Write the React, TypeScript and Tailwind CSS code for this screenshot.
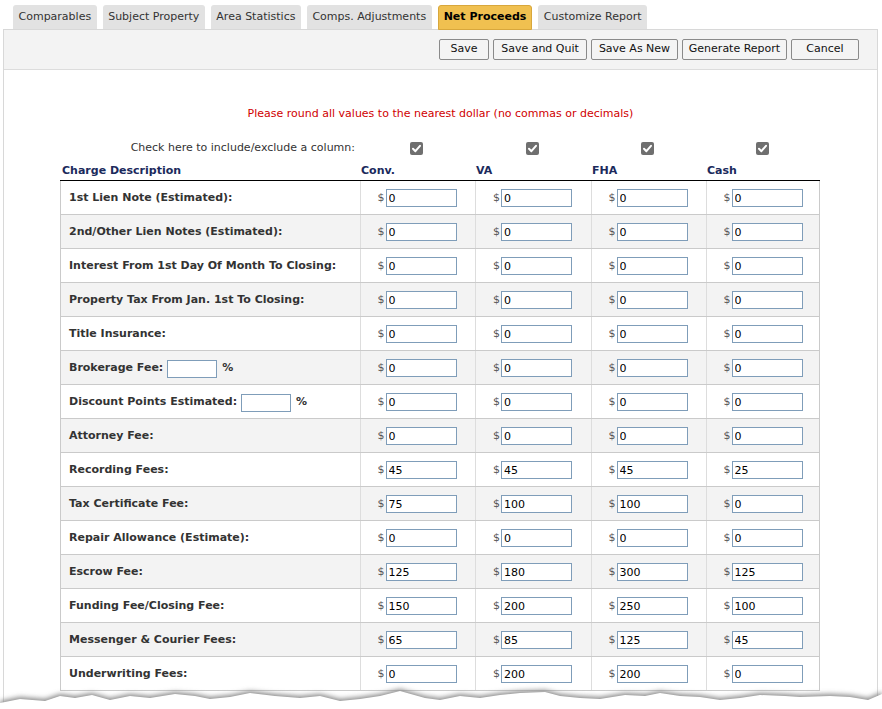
import React from 'react';

const tabs = ['Comparables', 'Subject Property', 'Area Statistics', 'Comps. Adjustments', 'Net Proceeds', 'Customize Report'];

const buttons = [
  { label: 'Save', w: 'w-[50px]' },
  { label: 'Save and Quit', w: 'w-[94px]' },
  { label: 'Save As New', w: 'w-[87px]' },
  { label: 'Generate Report', w: 'w-[105px]' },
  { label: 'Cancel', w: 'w-[68px]' },
];

type Row = { label: string; pct?: boolean; values: string[] };

const rows: Row[] = [
  { label: '1st Lien Note (Estimated):', values: ['0', '0', '0', '0'] },
  { label: '2nd/Other Lien Notes (Estimated):', values: ['0', '0', '0', '0'] },
  { label: 'Interest From 1st Day Of Month To Closing:', values: ['0', '0', '0', '0'] },
  { label: 'Property Tax From Jan. 1st To Closing:', values: ['0', '0', '0', '0'] },
  { label: 'Title Insurance:', values: ['0', '0', '0', '0'] },
  { label: 'Brokerage Fee:', pct: true, values: ['0', '0', '0', '0'] },
  { label: 'Discount Points Estimated:', pct: true, values: ['0', '0', '0', '0'] },
  { label: 'Attorney Fee:', values: ['0', '0', '0', '0'] },
  { label: 'Recording Fees:', values: ['45', '45', '45', '25'] },
  { label: 'Tax Certificate Fee:', values: ['75', '100', '100', '0'] },
  { label: 'Repair Allowance (Estimate):', values: ['0', '0', '0', '0'] },
  { label: 'Escrow Fee:', values: ['125', '180', '300', '125'] },
  { label: 'Funding Fee/Closing Fee:', values: ['150', '200', '250', '100'] },
  { label: 'Messenger & Courier Fees:', values: ['65', '85', '125', '45'] },
  { label: 'Underwriting Fees:', values: ['0', '200', '200', '0'] },
];

const columns = ['Conv.', 'VA', 'FHA', 'Cash'];

function CheckBox() {
  return (
    <svg width="13" height="13" viewBox="0 0 13 13">
      <rect x="0" y="0" width="13" height="13" rx="2" fill="#6f6f6f" />
      <path d="M3 6.8 L5.4 9.2 L10 3.8" stroke="#fff" strokeWidth="2" fill="none" strokeLinecap="round" strokeLinejoin="round" />
    </svg>
  );
}

// jagged paper tear at the bottom of the screenshot
function TornEdge() {
  const pts = 'M0 709 L0 697 L20 693 L45 695 L60 690 L75 692 L92 689 L110 694 L130 690 L150 692 L175 688 L195 690 L210 693 L230 691 L250 687 L275 690 L300 692 L320 690 L340 695 L360 693 L380 690 L400 685 L425 692 L440 694 L460 690 L480 692 L500 689 L520 687 L545 686 L560 690 L580 692 L600 693 L625 689 L645 690 L660 687 L680 690 L700 691 L720 694 L740 692 L760 689 L785 690 L800 691 L830 690 L850 691 L868 694 L882 688 L882 709 Z';
  return (
    <svg className="absolute left-0 top-0 pointer-events-none" width="882" height="709" viewBox="0 0 882 709">
      <defs>
        <filter id="sh" x="-5%" y="-50%" width="110%" height="200%">
          <feGaussianBlur stdDeviation="2.5" />
        </filter>
      </defs>
      <path d={pts} fill="#8a8a8a" filter="url(#sh)" transform="translate(0 4)" />
      <path d={pts} fill="#ffffff" transform="translate(0 6)" />
    </svg>
  );
}

export default function App() {
  return (
    <div className="relative w-[882px] h-[709px] overflow-hidden bg-white font-['DejaVu_Sans',sans-serif]">
      {/* Tabs */}
      <div className="flex gap-[6px] pl-[13px] pt-[5px]">
        {tabs.map((t) =>
          t === 'Net Proceeds' ? (
            <div key={t} className="h-[25px] px-[5px] flex items-center rounded-t-[3px] bg-[#f0c050] border border-[#d8a73c] text-[11px] font-bold text-black relative z-10">
              {t}
            </div>
          ) : (
            <div key={t} className="h-[24px] px-[5.5px] flex items-center rounded-t-[3px] bg-[#e2e2e2] text-[11px] text-[#333]">
              {t}
            </div>
          )
        )}
      </div>

      {/* Panel */}
      <div className="ml-[3px] w-[875px] h-[700px] border border-[#d8d8d8] -mt-px">
        <div className="h-[40px] bg-[#f3f3f3] border-b border-[#dcdcdc] flex justify-end items-start pt-[9px] pr-[18px] gap-[4px]">
          {buttons.map((b) => (
            <button key={b.label} className={`${b.w} h-[21px] bg-[#f4f4f4] border border-[#8a8a8a] rounded-[2px] text-[11px] text-[#111] flex items-center justify-center`}>
              {b.label}
            </button>
          ))}
        </div>

        <div className="pt-[37px] text-center text-[11px] text-[#d00000] leading-[14px]">
          Please round all values to the nearest dollar (no commas or decimals)
        </div>

        <div className="ml-[56px] w-[760px]">
          <div className="grid grid-cols-[299px_115px_116px_115px_115px] mt-[19px] h-[14px] items-center">
            <div className="text-right pr-[4px] text-[11px] text-[#333]">Check here to include/exclude a column:</div>
            {columns.map((c) => (
              <div key={c} className="flex justify-center">
                <CheckBox />
              </div>
            ))}
          </div>

          <div className="grid grid-cols-[299px_115px_116px_115px_115px] mt-[9px] h-[18px] border-b border-black text-[11px] font-bold text-[#1b2a5c]">
            <div className="pl-[2px]">Charge Description</div>
            {columns.map((c) => (
              <div key={c} className="pl-[2px]">{c}</div>
            ))}
          </div>

          {rows.map((r, i) => (
            <div
              key={r.label}
              className={`grid grid-cols-[299px_115px_116px_115px_115px] h-[34px] border-b border-l border-r border-[#cacaca] ${i % 2 === 1 ? 'bg-[#f3f3f3]' : 'bg-white'}`}
            >
              <div className="flex items-center pl-[8px] pt-[2px] text-[11px] font-bold text-[#333]">
                {r.label}
                {r.pct && (
                  <>
                    <input className="ml-[4px] w-[50px] h-[18px] border border-[#7f9db9] bg-white" defaultValue="" />
                    <span className="ml-[5px]">%</span>
                  </>
                )}
              </div>
              {r.values.map((v, j) => (
                <div key={j} className="flex items-center justify-center border-l border-[#dddddd] pr-[2px] pt-[1px]">
                  <span className="text-[11px] text-[#555] mr-px">$</span>
                  <input className="w-[71px] h-[18px] border border-[#7f9db9] bg-white text-[11px] text-black pl-[2px] outline-none" defaultValue={v} />
                </div>
              ))}
            </div>
          ))}
        </div>
      </div>

      <TornEdge />
    </div>
  );
}
